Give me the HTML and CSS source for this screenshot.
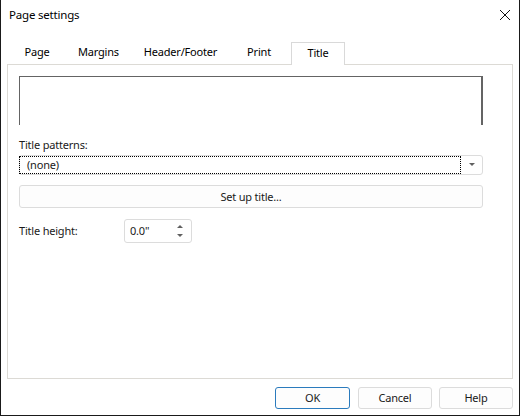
FILE: index.html
```html
<!DOCTYPE html>
<html>
<head>
<meta charset="utf-8">
<link rel="stylesheet" href="styles.css">
</head>
<body>
<div class="window">
  <div class="titlebar">
    <span class="title">Page settings</span>
    <svg class="close" width="12" height="12" viewBox="0 0 12 12"><path d="M1 1L11 11M11 1L1 11" stroke="#111" stroke-width="1"/></svg>
  </div>
  <div class="tabs">
    <div class="tab t-page">Page</div>
    <div class="tab t-margins">Margins</div>
    <div class="tab t-hf">Header/Footer</div>
    <div class="tab t-print">Print</div>
    <div class="tab t-title active">Title</div>
  </div>
  <div class="panel">
    <div class="preview"></div>
    <div class="label">Title patterns:</div>
    <div class="combo">
      <div class="combo-field">(none)</div>
      <div class="combo-arrow"><svg width="6" height="4" viewBox="0 0 6 4"><path d="M0 0H6L3 3Z" fill="#606060"/></svg></div>
    </div>
    <div class="btn wide">Set up title...</div>
    <div class="row">
      <div class="row-label">Title height:</div>
      <div class="spin">
        <span class="spin-val">0.0"</span>
        <div class="spin-arrows">
          <svg width="6" height="4" viewBox="0 0 6 4"><path d="M3 0L6 3H0Z" fill="#606060"/></svg>
          <svg width="6" height="4" viewBox="0 0 6 4"><path d="M0 0H6L3 3Z" fill="#606060"/></svg>
        </div>
      </div>
    </div>
  </div>
  <div class="footer">
    <div class="btn dlg default">OK</div>
    <div class="btn dlg">Cancel</div>
    <div class="btn dlg">Help</div>
  </div>
</div>
</body>
</html>
```
FILE: styles.css
```css
* { box-sizing: border-box; }
html, body { margin: 0; padding: 0; background: #fff; }
body {
  font-family: "Noto Sans", "Liberation Sans", sans-serif;
  font-size: 11px;
  letter-spacing: -0.2px;
  color: #1a1a1a;
}
.window {
  width: 520px;
  height: 416px;
  border: 1px solid #1a1a1a;
  border-top: none;
  background: #fff;
  display: flex;
  flex-direction: column;
}
.titlebar {
  height: 30px;
  display: flex;
  align-items: center;
  justify-content: space-between;
  padding-left: 8px;
  padding-right: 8px;
  padding-bottom: 2px;
}
.title { font-size: 11.5px; color: #000; }
.close { margin-top: 1px; }
.tabs {
  margin-top: 12px;
  height: 22px;
  display: flex;
  align-items: flex-end;
  padding-left: 8px;
  position: relative;
  z-index: 2;
}
.tab {
  height: 22px;
  line-height: 20px;
  text-align: center;
  white-space: nowrap;
  color: #000;
}
.t-page { width: 56px; }
.t-margins { width: 67px; }
.t-hf { width: 97px; }
.t-print { width: 60px; }
.t-title { width: 54px; margin-left: 2px; }
.tab.active {
  height: 23px;
  margin-bottom: -1px;
  border: 1px solid #d9d9d9;
  border-bottom: none;
  background: #fff;
  line-height: 20px;
}
.panel {
  margin-left: 6px;
  width: 506px;
  height: 315px;
  border: 1px solid #dcdad5;
  padding: 11px 29px 11px 11px;
  display: flex;
  flex-direction: column;
}
.preview {
  width: 464px;
  height: 49px;
  border-top: 1px solid #646464;
  border-left: 1px solid #646464;
  border-right: 2px solid #646464;
}
.label {
  margin-top: 12px;
  height: 16px;
  line-height: 16px;
  margin-bottom: 2px;
}
.combo {
  width: 464px;
  height: 20px;
  border: 1px solid #dcdcdc;
  border-radius: 3px;
  display: flex;
}
.combo-field {
  margin-left: -1px;
  width: 442px;
  height: 18px;
  border: 1px dotted #000;
  line-height: 15px;
  padding-left: 7px;
}
.combo-arrow {
  flex: 1;
  display: flex;
  align-items: center;
  justify-content: center;
  padding-left: 1px;
}
.btn {
  border: 1px solid #dcdcdc;
  border-radius: 3px;
  display: flex;
  align-items: center;
  justify-content: center;
  background: #fdfdfd;
}
.wide {
  margin-top: 10px;
  width: 464px;
  height: 23px;
  padding-bottom: 1px;
}
.row {
  margin-top: 11px;
  display: flex;
  align-items: center;
}
.row-label { width: 105px; padding-bottom: 1px; }
.spin {
  width: 68px;
  height: 24px;
  border: 1px solid #dcdcdc;
  border-radius: 3px;
  display: flex;
  align-items: center;
  justify-content: space-between;
  padding-left: 5px;
  padding-right: 8px;
}
.spin-val { padding-bottom: 1px; }
.spin-arrows {
  display: flex;
  flex-direction: column;
  gap: 5px;
  padding-top: 1px;
}
.spin-arrows svg { display: block; }
.footer {
  margin-top: 8px;
  display: flex;
  justify-content: flex-end;
  gap: 7px;
  padding-right: 6px;
}
.dlg {
  width: 74px;
  height: 22px;
  padding-bottom: 1px;
}
.default { border-color: #2b7bbd; width: 75px; margin-right: 1px; }
```
